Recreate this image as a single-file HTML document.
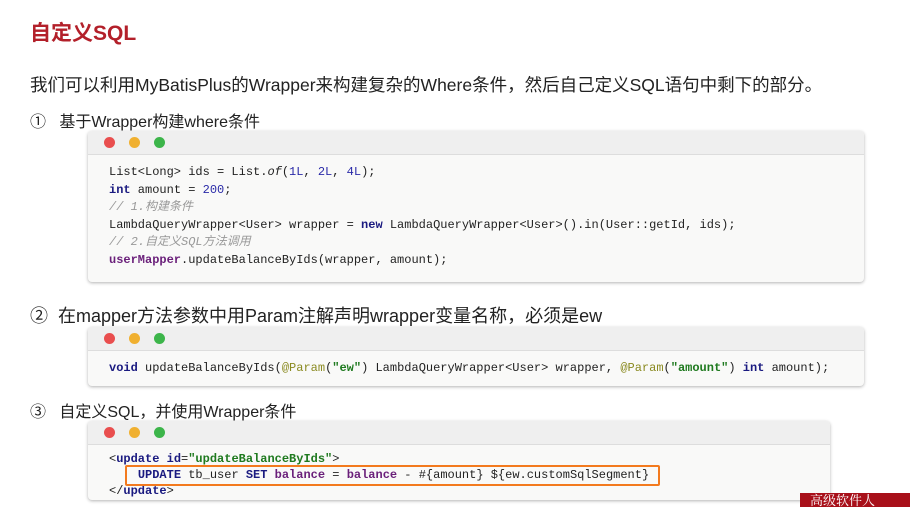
<!DOCTYPE html>
<html><head><meta charset="utf-8"><style>
body{margin:0;width:910px;height:507px;background:#fff;position:relative;overflow:hidden;font-family:"Liberation Sans","Noto Sans CJK SC",sans-serif;color:#222}
.a{position:absolute;white-space:nowrap}
.box{position:absolute;background:#f9f9f8;border-radius:4px;box-shadow:0 1px 3px rgba(0,0,0,.3);overflow:hidden}
.hd{height:23px;background:#efefef;border-bottom:1px solid #ddd;position:relative}
.d{position:absolute;top:6px;width:11px;height:11px;border-radius:50%}
.code{position:absolute;left:21px;font-family:"Liberation Mono","Noto Sans CJK SC",monospace;font-size:12px;color:#222;white-space:pre}
.k{color:#1a1a80;font-weight:bold}.n{color:#2a2aa8}.c{color:#999;font-style:italic}.p{color:#6a1f7a;font-weight:bold}.s{color:#1f7a1f;font-weight:bold}.an{color:#8a8a20}
</style></head><body>
<div class="a" style="left:30px;top:17px;font-size:21px;font-weight:bold;color:#b3202a">自定义SQL</div>
<div class="a" style="left:30px;top:72px;font-size:17.5px">我们可以利用MyBatisPlus的Wrapper来构建复杂的Where条件，然后自己定义SQL语句中剩下的部分。</div>
<div class="a" style="left:30px;top:108px;font-size:16px">①&nbsp;&nbsp;&nbsp;基于Wrapper构建where条件</div>
<div class="box" style="left:88px;top:131px;width:776px;height:151px">
<div class="hd"><span class="d" style="left:16px;background:#e94e4e"></span><span class="d" style="left:41px;background:#f0b030"></span><span class="d" style="left:66px;background:#3cb54a"></span></div>
<div class="code" style="top:33px;line-height:17.6px">List&lt;Long&gt; ids = List.<i>of</i>(<span class="n">1L</span>, <span class="n">2L</span>, <span class="n">4L</span>);
<span class="k">int</span> amount = <span class="n">200</span>;
<span class="c">// 1.构建条件</span>
LambdaQueryWrapper&lt;User&gt; wrapper = <span class="k">new</span> LambdaQueryWrapper&lt;User&gt;().in(User::getId, ids);
<span class="c">// 2.自定义SQL方法调用</span>
<span class="p">userMapper</span>.updateBalanceByIds(wrapper, amount);</div>
</div>
<div class="a" style="left:30px;top:302px;font-size:18px">②&nbsp;&nbsp;在mapper方法参数中用Param注解声明wrapper变量名称，必须是ew</div>
<div class="box" style="left:88px;top:327px;width:776px;height:59px">
<div class="hd"><span class="d" style="left:16px;background:#e94e4e"></span><span class="d" style="left:41px;background:#f0b030"></span><span class="d" style="left:66px;background:#3cb54a"></span></div>
<div class="code" style="top:33px;line-height:17px"><span class="k">void</span> updateBalanceByIds(<span class="an">@Param</span>(<span class="s">"ew"</span>) LambdaQueryWrapper&lt;User&gt; wrapper, <span class="an">@Param</span>(<span class="s">"amount"</span>) <span class="k">int</span> amount);</div>
</div>
<div class="a" style="left:30px;top:398px;font-size:16px">③&nbsp;&nbsp;&nbsp;自定义SQL，并使用Wrapper条件</div>
<div class="box" style="left:88px;top:421px;width:742px;height:79px">
<div class="hd"><span class="d" style="left:16px;background:#e94e4e"></span><span class="d" style="left:41px;background:#f0b030"></span><span class="d" style="left:66px;background:#3cb54a"></span></div>
<div class="code" style="top:30px;line-height:16px">&lt;<span class="k">update</span> <span class="k">id</span>=<span class="s">"updateBalanceByIds"</span>&gt;
    <span class="k">UPDATE</span> tb_user <span class="k">SET</span> <span class="p">balance</span> = <span class="p">balance</span> - #{amount} ${ew.customSqlSegment}
&lt;/<span class="k">update</span>&gt;</div>
<div style="position:absolute;left:37px;top:44px;width:531px;height:17px;border:2.5px solid #f37a1e;border-radius:2px"></div>
</div>
<div class="a" style="left:800px;top:493px;width:110px;height:14px;background:#a8101a;color:#fff;font-size:13px;line-height:14px;padding-left:10px;font-family:'Noto Serif CJK SC',serif">高级软件人</div>
</body></html>
